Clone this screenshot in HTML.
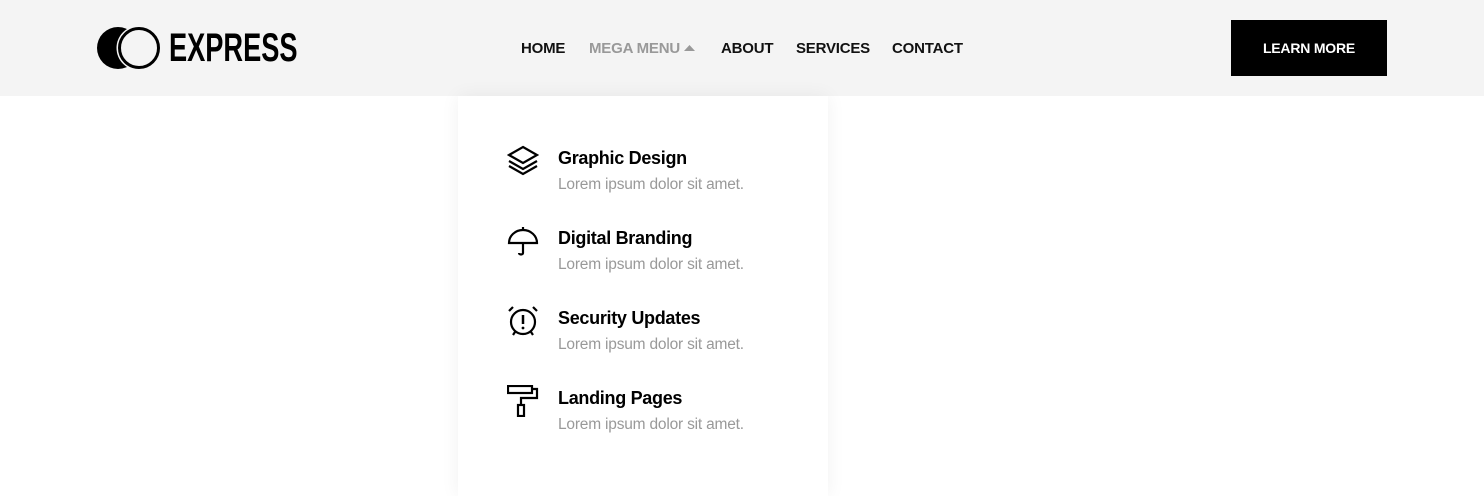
<!DOCTYPE html>
<html><head><style>
*{margin:0;padding:0;box-sizing:border-box}
body{width:1484px;height:481px;background:#fff;font-family:"Liberation Sans",sans-serif;position:relative;overflow:hidden}
.hdr{position:absolute;left:0;top:0;width:1484px;height:96px;background:#f4f4f4}
.logo{position:absolute;left:97px;top:26px}
.brand{position:absolute;left:169px;top:28px;font-weight:700;font-size:40px;line-height:40px;color:#000;transform:scaleX(0.68);transform-origin:left}
.nav{position:absolute;top:40px;font-size:15px;font-weight:700;color:#111;letter-spacing:-0.2px}
.btn{position:absolute;left:1231px;top:20px;width:156px;height:56px;background:#000;color:#fff;font-size:14px;font-weight:700;text-align:center;line-height:56px;letter-spacing:-0.2px}
.panel{position:absolute;left:458px;top:96px;width:370px;height:400px;background:#fff;box-shadow:0 0 18px rgba(0,0,0,0.06)}
.it{position:absolute;left:100px}
.t{font-size:18px;font-weight:700;color:#000;letter-spacing:-0.3px}
.d{font-size:15.5px;color:#999;margin-top:7px;letter-spacing:-0.2px}
svg.ic{position:absolute;left:507px}
</style></head><body>
<div class="hdr">
<svg class="logo" width="66" height="44" viewBox="0 0 66 44"><circle cx="21" cy="22" r="21" fill="#000"/><circle cx="42" cy="22" r="22.5" fill="#f4f4f4"/><circle cx="42" cy="22" r="19.5" fill="none" stroke="#000" stroke-width="3"/></svg>
<div class="brand">EXPRESS</div>
<div class="nav" style="left:521px">HOME</div>
<div class="nav" style="left:589px;color:#999">MEGA MENU</div>
<svg style="position:absolute;left:684px;top:45px" width="11" height="6"><path d="M0 6L5.5 0L11 6Z" fill="#999"/></svg>
<div class="nav" style="left:721px">ABOUT</div>
<div class="nav" style="left:796px">SERVICES</div>
<div class="nav" style="left:892px">CONTACT</div>
<div class="btn">LEARN MORE</div>
</div>
<div class="panel">
<div class="it" style="top:52px"><div class="t">Graphic Design</div><div class="d">Lorem ipsum dolor sit amet.</div></div>
<div class="it" style="top:132px"><div class="t">Digital Branding</div><div class="d">Lorem ipsum dolor sit amet.</div></div>
<div class="it" style="top:212px"><div class="t">Security Updates</div><div class="d">Lorem ipsum dolor sit amet.</div></div>
<div class="it" style="top:292px"><div class="t">Landing Pages</div><div class="d">Lorem ipsum dolor sit amet.</div></div>
</div>
<svg class="ic" style="top:145px" width="32" height="32" viewBox="0 0 32 32" fill="none" stroke="#000" stroke-width="2.2"><path d="M16 2L30 10L16 18L2 10Z"/><path d="M2 16L16 24L30 16"/><path d="M2 21L16 29L30 21"/></svg>
<svg class="ic" style="top:225px" width="32" height="32" viewBox="0 0 32 32" fill="none" stroke="#000" stroke-width="2.2"><path d="M16 2V5"/><path d="M2 18C2 11 8 5 16 5C24 5 30 11 30 18Z"/><path d="M16 18V28C16 30 12 30 12 28"/></svg>
<svg class="ic" style="top:305px" width="32" height="32" viewBox="0 0 32 32" fill="none" stroke="#000" stroke-width="2.2"><circle cx="16" cy="17" r="12"/><path d="M2 6L6 2M30 6L26 2M6 30L8 27M26 30L24 27"/><path d="M16 10V19" stroke-width="2.5"/><circle cx="16" cy="23" r="1.4" fill="#000" stroke="none"/></svg>
<svg class="ic" style="top:385px" width="32" height="32" viewBox="0 0 32 32" fill="none" stroke="#000" stroke-width="2.2"><rect x="1" y="1" width="24" height="7"/><path d="M25 4H30V13H14V20"/><rect x="11" y="20" width="6" height="11"/></svg>
</body></html>
